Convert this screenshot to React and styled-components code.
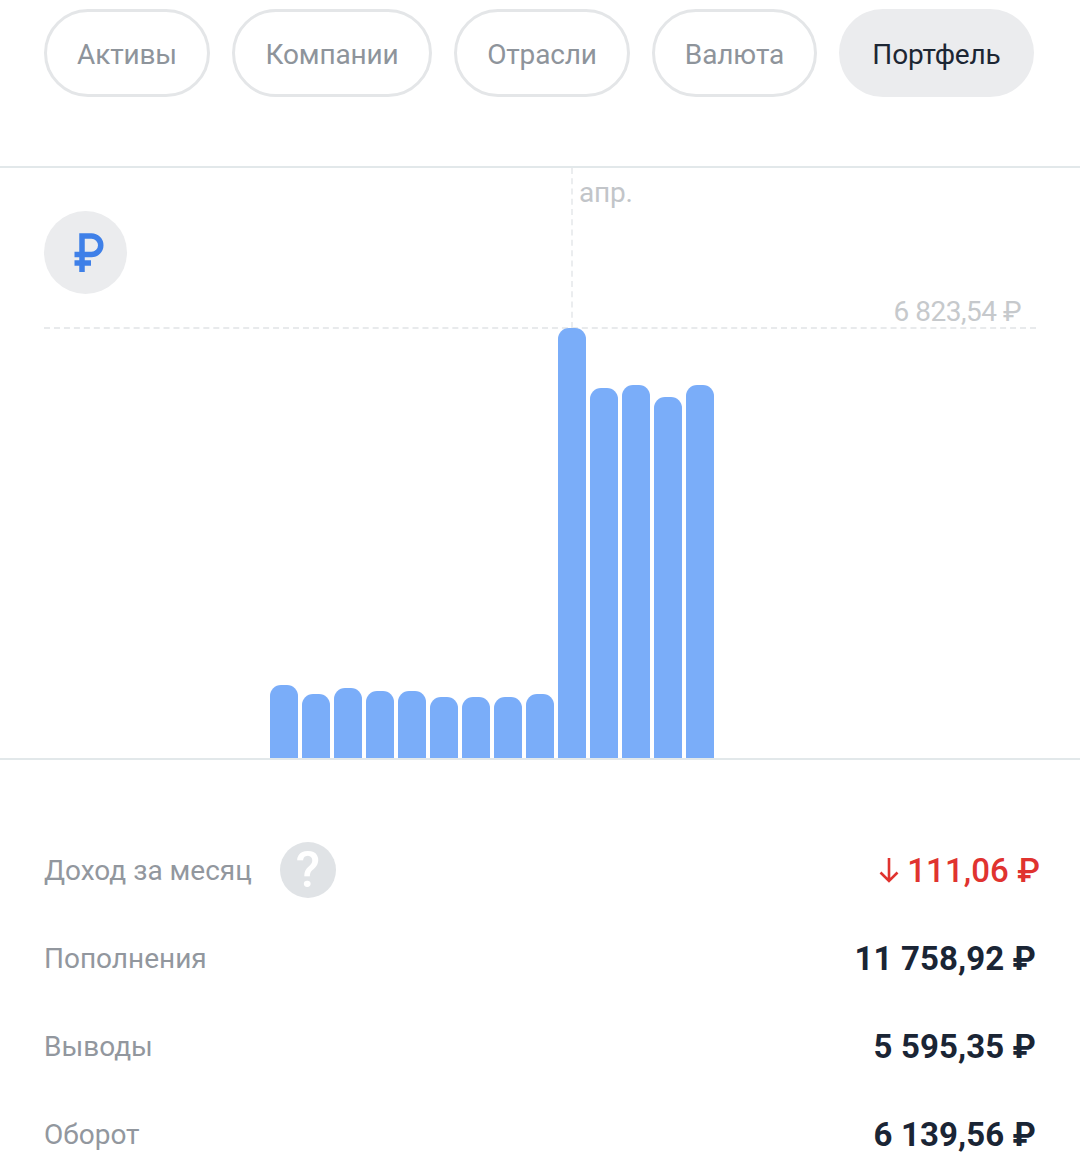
import React from "react";
import styled, { createGlobalStyle } from "styled-components";

const Global = createGlobalStyle`
  html, body { margin: 0; padding: 0; background: #fff; }
  body { font-family: Roboto, "Liberation Sans", sans-serif; overflow: hidden; }
  * { box-sizing: border-box; }
`;

const Page = styled.div`
  width: 1080px;
  height: 1167px;
  overflow: hidden;
  background: #fff;
`;

const Tabs = styled.div`
  display: flex;
  gap: 22px;
  padding: 9px 0 0 44px;
  height: 166px;
`;

const Tab = styled.div`
  height: 88px;
  width: ${(p) => p.$w}px;
  border-radius: 44px;
  display: flex;
  align-items: center;
  justify-content: center;
  padding-top: 2px;
  font-size: 28px;
  letter-spacing: -0.15px;
  color: ${(p) => (p.$active ? "#1c2633" : "#8e949b")};
  background: ${(p) => (p.$active ? "#ebecee" : "#fff")};
  border: ${(p) => (p.$active ? "none" : "3px solid #e4e6e8")};
`;

const Chart = styled.div`
  position: relative;
  height: 594px;
  border-top: 2px solid #e2e8ea;
  border-bottom: 2px solid #e2e8ea;
  display: flex;
  align-items: flex-end;
  gap: 4px;
  padding-left: 270px;
`;

const Bar = styled.div`
  position: relative;
  width: 28px;
  background: #7aadf9;
  border-radius: 11px 11px 0 0;
`;

const VGuide = styled.div`
  position: absolute;
  left: 571px;
  top: 0;
  height: 160px;
  border-left: 2px dashed #ebedef;
`;

const HGuide = styled.div`
  position: absolute;
  left: 44px;
  top: 159px;
  width: 992px;
  border-top: 2px dashed #e8eaec;
`;

const MonthLabel = styled.div`
  position: absolute;
  left: 579px;
  top: 8px;
  font-size: 28px;
  line-height: 34px;
  letter-spacing: -0.2px;
  color: #c2c5c9;
`;

const MaxLabel = styled.div`
  position: absolute;
  right: 59px;
  top: 127px;
  font-size: 28px;
  line-height: 34px;
  letter-spacing: -0.5px;
  color: #c6c9cc;
`;

const CurrencyBadge = styled.div`
  position: absolute;
  left: 44px;
  top: 43px;
  width: 83px;
  height: 83px;
  border-radius: 50%;
  background: #ebecee;
  display: flex;
  align-items: center;
  justify-content: center;
`;

const RubleIcon = styled.svg`
  width: 30px;
  height: 39px;
  margin-left: 6px;
`;

const Stats = styled.div`
  padding: 66px 44px 0;
  display: flex;
  flex-direction: column;
`;

const Row = styled.div`
  height: 88px;
  display: flex;
  align-items: center;
  justify-content: space-between;
`;

const LabelWrap = styled.div`
  display: flex;
  align-items: center;
  gap: 28px;
`;

const Label = styled.span`
  font-size: 28px;
  letter-spacing: 0;
  color: #92979e;
`;

const Help = styled.span`
  width: 56px;
  height: 56px;
  border-radius: 50%;
  background: #e0e3e6;
  color: #fff;
  font-size: 50px;
  font-weight: 500;
  line-height: 56px;
  display: flex;
  align-items: center;
  justify-content: center;
`;

const Value = styled.span`
  display: flex;
  align-items: center;
  font-size: 33px;
  letter-spacing: 0.1px;
  white-space: pre;
  color: ${(p) => (p.$red ? "#e0332f" : "#1a2535")};
  margin-right: ${(p) => (p.$red ? "-4px" : "0")};
  font-weight: ${(p) => (p.$red ? 500 : 700)};
`;

const ArrowIcon = styled.svg`
  width: 22px;
  height: 26px;
  margin-right: 7px;
`;

const tabs = [
  ["Активы", 166],
  ["Компании", 200],
  ["Отрасли", 176],
  ["Валюта", 165],
  ["Портфель", 195],
];

const bars = [73, 64, 70, 67, 67, 61, 61, 61, 64, 430, 370, 373, 361, 373];

const rows = [
  ["Пополнения", "11 758,92 ₽"],
  ["Выводы", "5 595,35 ₽"],
  ["Оборот", "6 139,56 ₽"],
];

export default function App() {
  return (
    <Page>
      <Global />
      <Tabs>
        {tabs.map(([t, w], i) => (
          <Tab key={t} $w={w} $active={i === 4}>
            {t}
          </Tab>
        ))}
      </Tabs>
      <Chart>
        <VGuide />
        <HGuide />
        <MonthLabel>апр.</MonthLabel>
        <MaxLabel>6 823,54 ₽</MaxLabel>
        <CurrencyBadge>
          <RubleIcon viewBox="0 0 30 39" fill="none" stroke="#3f80e8" strokeWidth="5.5">
            <path d="M8 39V3h9.5a9 9 0 0 1 0 18.5H0.5" />
            <path d="M0.5 30H17" />
          </RubleIcon>
        </CurrencyBadge>
        {bars.map((h, i) => (
          <Bar key={i} style={{ height: h }} />
        ))}
      </Chart>
      <Stats>
        <Row>
          <LabelWrap>
            <Label>Доход за месяц</Label>
            <Help>?</Help>
          </LabelWrap>
          <Value $red>
            <ArrowIcon viewBox="0 0 22 26" fill="none" stroke="#e0332f" strokeWidth="2.6">
              <path d="M11 1v23M2.5 15.5 11 24l8.5-8.5" />
            </ArrowIcon>
            111,06 ₽
          </Value>
        </Row>
        {rows.map(([l, v]) => (
          <Row key={l}>
            <Label>{l}</Label>
            <Value>{v}</Value>
          </Row>
        ))}
      </Stats>
    </Page>
  );
}
